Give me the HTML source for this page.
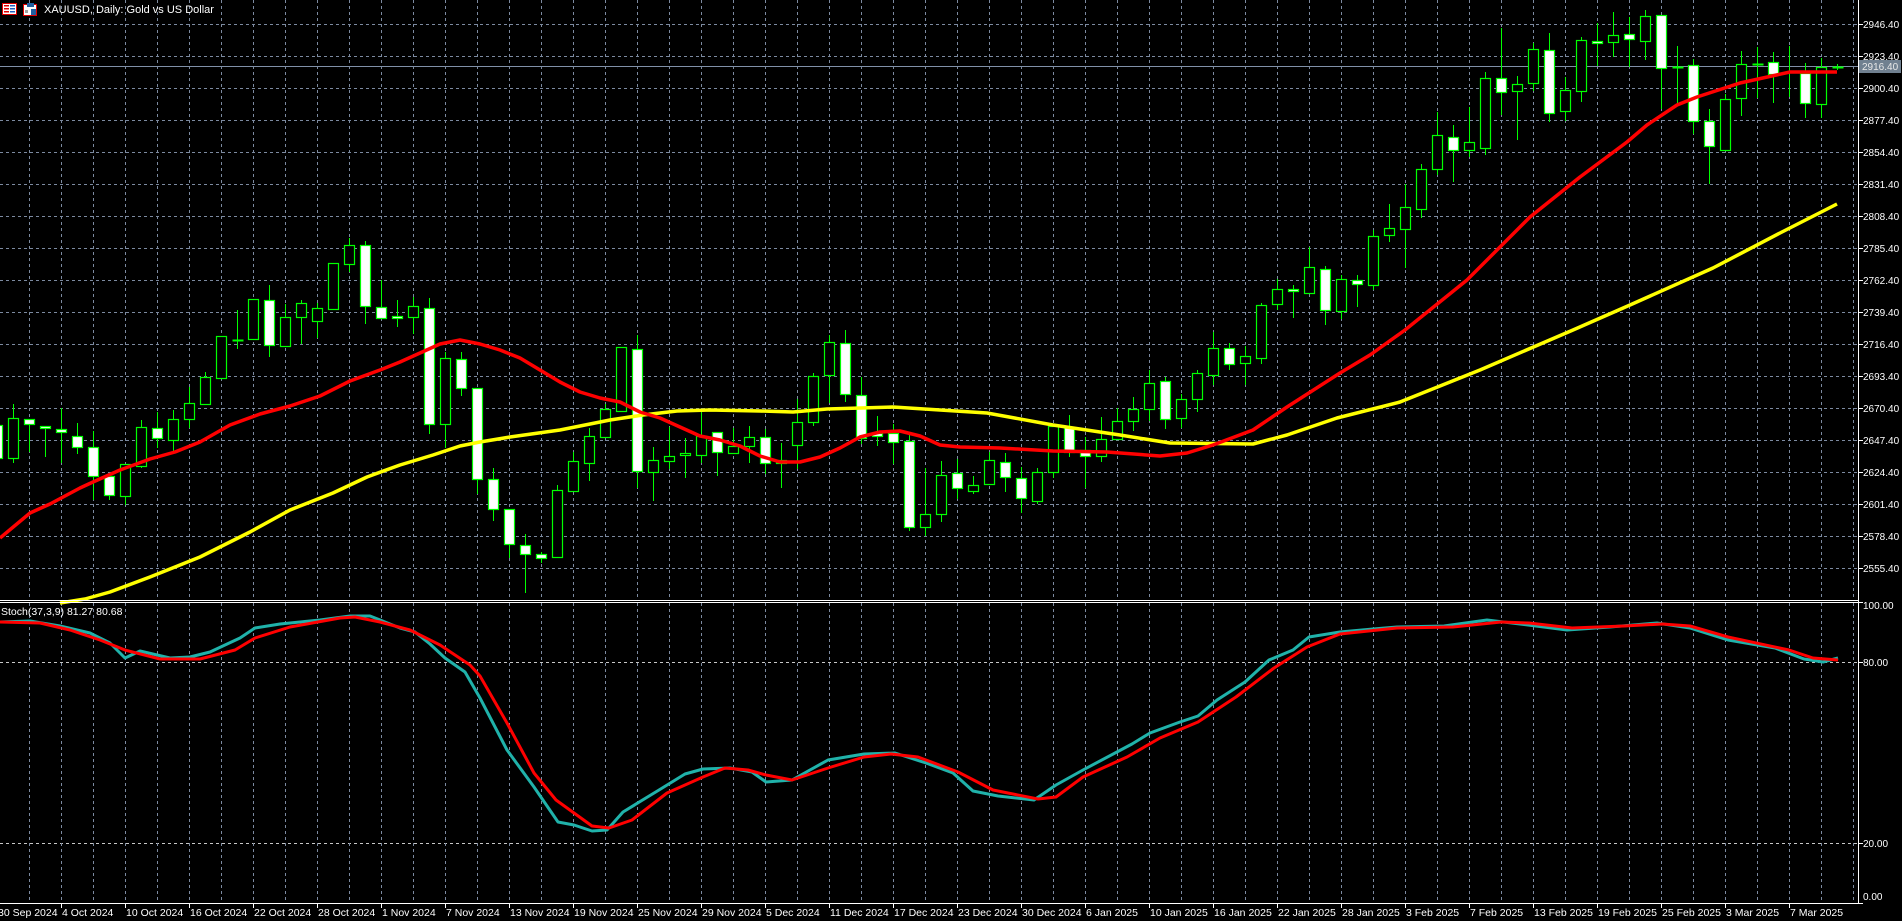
<!DOCTYPE html>
<html><head><meta charset="utf-8">
<style>
html,body{margin:0;padding:0;background:#000;overflow:hidden;}
svg{display:block;}
text{font-family:"Liberation Sans",sans-serif;font-size:10px;fill:#fff;}
</style></head>
<body>
<svg id="s" width="1902" height="921" xmlns="http://www.w3.org/2000/svg">
<rect width="1902" height="921" fill="#000"/>
<g id="grid"></g>
<g id="cand"></g>
<g id="lines"></g>
<g id="axes"></g>
<!-- title icons -->
<g>
<rect x="2.5" y="3.5" width="14" height="11" fill="#fff" stroke="#e00000"/>
<rect x="4" y="5" width="5" height="1.5" fill="#e00000"/><rect x="4" y="8" width="5" height="1.5" fill="#e00000"/><rect x="4" y="11" width="5" height="1.5" fill="#e00000"/>
<rect x="10" y="5" width="5" height="1.5" fill="#2060c0"/><rect x="10" y="8" width="5" height="1.5" fill="#2060c0"/><rect x="10" y="11" width="5" height="1.5" fill="#2060c0"/>
<rect x="23.5" y="4.5" width="13" height="11" fill="#fff" stroke="#e00000"/>
<rect x="27" y="3" width="7" height="4" fill="#2060a0"/>
<rect x="31" y="9" width="5" height="6" fill="#2060a0"/>
<rect x="25" y="10" width="3" height="3" fill="#a0a0a0"/>
</g>
<text x="44" y="13" style="font-size:11px">XAUUSD, Daily:  Gold vs US Dollar</text>
<text x="1" y="615" style="font-size:10.5px">Stoch(37,3,9) 81.27 80.68</text>
</svg>
<script>
var NS="http://www.w3.org/2000/svg";
function el(p,t,a,txt){var e=document.createElementNS(NS,t);for(var k in a)e.setAttribute(k,a[k]);if(txt!==undefined)e.textContent=txt;document.getElementById(p).appendChild(e);return e;}
var GC="#7c8aa0";
// grid
for(var j=0;j<18;j++){var y=24+32*j+0.5;el("grid","line",{x1:0,y1:y,x2:1858,y2:y,stroke:GC,"stroke-dasharray":"3,3"});}
[662.5,843.5].forEach(function(y){el("grid","line",{x1:0,y1:y,x2:1858,y2:y,stroke:"#c8c8c8","stroke-dasharray":"3,3"});});
for(var x=29.5;x<1858;x+=32){el("grid","line",{x1:x,y1:0,x2:x,y2:600,stroke:GC,"stroke-dasharray":"3,3"});el("grid","line",{x1:x,y1:603,x2:x,y2:903,stroke:GC,"stroke-dasharray":"3,3"});}
// current price line
el("grid","line",{x1:0,y1:66.5,x2:1858,y2:66.5,stroke:"#8090a8"});
// candles [k, bodyTop, bodyBot, wickTop, wickBot, filled]
var C=[
[-1,425,458,415,462,1],[0,418,458,404,462,0],[1,419,424,419,451,1],[2,426,428,426,456,1],[3,429,432,408,462,1],
[4,436,447,423,453,1],[5,447,476,431,499,1],[6,476,495,476,499,1],[7,464,496,464,504,0],[8,427,466,420,467,0],
[9,428,438,412,447,1],[10,419,440,410,451,0],[11,403,419,387,427,0],[12,377,404,372,404,0],[13,336,378,336,378,0],
[14,340,340,310,348,0],[15,299,339,299,339,0],[16,300,345,285,356,1],[17,317,346,304,346,0],[18,303,317,300,343,0],
[19,308,321,303,337,0],[20,263,309,263,309,0],[21,245,264,238,271,0],[22,245,306,241,323,1],[23,307,318,280,318,1],
[24,316,318,300,326,1],[25,306,317,297,333,0],[26,308,424,298,433,1],[27,358,424,352,447,0],[28,359,388,352,395,1],
[29,388,479,388,493,1],[30,479,509,468,520,1],[31,509,544,509,557,1],[32,545,554,534,592,1],[33,554,558,552,562,1],
[34,490,557,485,557,0],[35,461,491,452,491,0],[36,436,463,428,480,0],[37,409,437,404,437,0],[38,347,411,347,411,0],
[39,349,471,335,487,1],[40,460,472,447,500,0],[41,456,461,427,468,0],[42,453,455,438,477,0],[43,436,455,412,462,0],
[44,432,452,432,475,1],[45,446,453,428,453,0],[46,437,446,426,462,0],[47,437,463,429,473,1],[48,460,463,443,487,0],
[49,422,445,399,468,0],[50,376,422,373,425,0],[51,342,375,335,402,0],[52,343,394,330,401,1],[53,395,438,377,443,1],
[54,433,436,416,445,1],[55,433,442,424,463,1],[56,441,527,435,530,1],[57,514,527,468,535,0],[58,475,514,461,521,0],
[59,473,488,459,498,1],[60,485,491,476,493,0],[61,460,484,452,484,0],[62,462,477,453,491,1],[63,478,498,467,512,1],
[64,472,501,468,503,0],[65,426,472,426,477,0],[66,427,452,415,456,1],[67,450,456,437,487,1],[68,439,456,417,461,0],
[69,421,439,408,439,0],[70,409,421,397,430,0],[71,383,409,370,420,0],[72,381,419,377,428,1],[73,399,418,394,427,0],
[74,373,399,370,411,0],[75,348,375,332,384,0],[76,348,364,343,369,1],[77,356,363,346,384,0],[78,305,358,303,363,0],
[79,289,304,279,309,0],[80,289,291,285,317,1],[81,267,293,247,293,0],[82,269,310,266,324,1],[83,279,311,275,318,0],
[84,280,284,275,306,1],[85,236,285,230,289,0],[86,228,235,204,241,0],[87,207,229,184,267,0],[88,169,209,164,217,0],
[89,135,169,112,174,0],[90,137,150,125,181,1],[91,142,150,107,156,0],[92,78,148,72,154,0],[93,78,92,28,114,1],
[94,84,91,76,139,0],[95,49,83,43,90,0],[96,50,113,33,121,1],[97,90,111,77,120,0],[98,40,91,37,101,0],
[99,41,43,23,65,1],[100,35,42,12,56,0],[101,34,39,17,66,1],[102,16,41,10,59,0],[103,15,68,15,108,1],
[104,67,67,46,102,0],[105,65,121,59,133,1],[106,121,146,109,183,1],[107,99,150,94,150,0],[108,64,98,51,115,0],
[109,64,64,47,97,0],[110,62,74,52,102,1],[111,72,72,46,96,0],[112,73,103,63,117,1],[113,67,104,58,117,0],[114,67,67,64,69,0]
];
C.forEach(function(c){
 var cx=Math.round(13.3+16*c[0])+0.5;
 el("cand","line",{x1:cx,y1:c[3],x2:cx,y2:c[4]+1,stroke:"#00ff00"});
 if(c[2]-c[1]<1){el("cand","line",{x1:cx-5,y1:c[1]+0.5,x2:cx+6,y2:c[1]+0.5,stroke:"#00ff00","stroke-width":2});}
 else el("cand","rect",{x:cx-5,y:c[1]+0.5,width:10,height:c[2]-c[1],fill:c[5]?"#fff":"#000",stroke:"#00ff00","stroke-width":1.2});
});
function pl(pts,col,w){el("lines","polyline",{points:pts.map(function(p){return p.join(",");}).join(" "),fill:"none",stroke:col,"stroke-width":w,"stroke-linejoin":"round"});}
// yellow MA
pl([[60,603],[85,599],[110,592],[150,577],[200,557],[250,532],[290,510],[333,493],[367,477],[400,465],[433,455],[460,446],[480,442],[510,437],[560,430],[610,420],[643,415],[677,411],[710,410],[760,411],[793,412],[827,409],[893,407],[940,410],[987,413],[1053,425],[1120,435],[1170,443],[1253,444],[1287,435],[1337,418],[1400,402],[1480,370],[1573,330],[1630,305],[1713,268],[1780,233],[1837,204]],"#ffff00",3.5);
// red MA
pl([[0,538],[30,513],[50,504],[80,488],[93,482],[120,470],[150,459],[175,452],[200,442],[230,425],[260,414],[290,406],[320,396],[350,381],[380,370],[400,362],[420,353],[440,344],[460,340],[480,344],[500,350],[520,358],[540,370],[560,382],[580,392],[600,398],[620,402],[640,412],[660,418],[680,427],[700,436],[720,440],[740,446],[760,456],[780,462],[800,462],[820,457],[840,448],[860,437],[880,432],[900,431],[920,436],[940,445],[960,447],[1000,448],[1053,451],[1107,452],[1160,456],[1187,453],[1213,445],[1253,430],[1287,407],[1340,373],[1370,355],[1405,330],[1467,280],[1530,217],[1580,177],[1627,142],[1647,125],[1677,105],[1697,97],[1740,83],[1790,72],[1837,72]],"#ff0000",3.5);
// stoch teal
pl([[0,622],[30,621],[60,626],[90,633],[110,643],[125,658],[140,651],[170,658],[190,657],[210,652],[240,638],[255,628],[280,624],[320,620],[350,616],[370,616],[390,624],[400,628],[415,632],[430,644],[445,658],[465,672],[480,698],[507,750],[534,787],[558,822],[574,825],[592,831],[607,830],[623,812],[659,790],[685,774],[703,769],[730,768],[752,772],[766,782],[792,780],[828,760],[864,754],[895,753],[926,763],[953,773],[973,791],[998,796],[1034,800],[1056,785],[1083,770],[1132,744],[1150,733],[1180,722],[1198,716],[1217,700],[1245,682],[1269,660],[1293,650],[1309,637],[1340,632],[1373,629],[1397,627],[1444,626],[1487,620],[1520,624],[1567,630],[1610,627],[1657,623],[1690,628],[1728,640],[1775,648],[1804,659],[1823,662],[1838,658]],"#20b2aa",3);
// stoch red
pl([[0,622],[40,623],[70,630],[100,640],[125,650],[160,659],[200,659],[235,650],[255,638],[290,627],[340,618],[355,617],[380,622],[410,630],[440,645],[470,665],[480,676],[507,723],[534,773],[556,800],[592,826],[609,828],[632,820],[667,793],[703,777],[725,768],[748,770],[766,775],[792,780],[828,768],[864,757],[891,754],[918,757],[958,772],[993,790],[1038,799],[1056,797],[1083,777],[1127,757],[1160,738],[1198,722],[1236,697],[1274,668],[1307,647],[1340,634],[1397,628],[1453,627],[1501,622],[1529,623],[1572,628],[1624,626],[1662,624],[1690,626],[1728,637],[1789,650],[1813,658],[1838,660]],"#ff0000",3);
// axes
el("axes","line",{x1:0,y1:600.5,x2:1858,y2:600.5,stroke:"#fff"});
el("axes","line",{x1:0,y1:602.5,x2:1858,y2:602.5,stroke:"#fff"});
el("axes","line",{x1:1858.5,y1:0,x2:1858.5,y2:904,stroke:"#fff"});
el("axes","line",{x1:0,y1:903.5,x2:1858,y2:903.5,stroke:"#fff"});
for(var j=0;j<18;j++){var y=24+32*j;var p=(2946.4-23*j).toFixed(2);
 el("axes","line",{x1:1858,y1:y+0.5,x2:1863,y2:y+0.5,stroke:"#fff"});
 el("axes","text",{x:1863,y:y+4},p);}
// price label
el("axes","rect",{x:1859,y:60,width:42,height:13,fill:"#708090"});
el("axes","text",{x:1862,y:70,style:"fill:#e8e8e8"},"2916.40");
[[602,"100.00",609],[662,"80.00",666],[843,"20.00",847],[903,"0.00",900]].forEach(function(a){
 el("axes","line",{x1:1858,y1:a[0]+0.5,x2:1863,y2:a[0]+0.5,stroke:"#fff"});
 el("axes","text",{x:1863,y:a[2]},a[1]);});
var D=["30 Sep 2024","4 Oct 2024","10 Oct 2024","16 Oct 2024","22 Oct 2024","28 Oct 2024","1 Nov 2024","7 Nov 2024","13 Nov 2024","19 Nov 2024","25 Nov 2024","29 Nov 2024","5 Dec 2024","11 Dec 2024","17 Dec 2024","23 Dec 2024","30 Dec 2024","6 Jan 2025","10 Jan 2025","16 Jan 2025","22 Jan 2025","28 Jan 2025","3 Feb 2025","7 Feb 2025","13 Feb 2025","19 Feb 2025","25 Feb 2025","3 Mar 2025","7 Mar 2025"];
D.forEach(function(d,i){var x=Math.round(-2.7+64*i);
 el("axes","line",{x1:x+0.5,y1:903,x2:x+0.5,y2:908,stroke:"#fff"});
 el("axes","text",{x:x+1,y:916,style:"font-size:10.5px"},d);});
</script>
</body></html>
